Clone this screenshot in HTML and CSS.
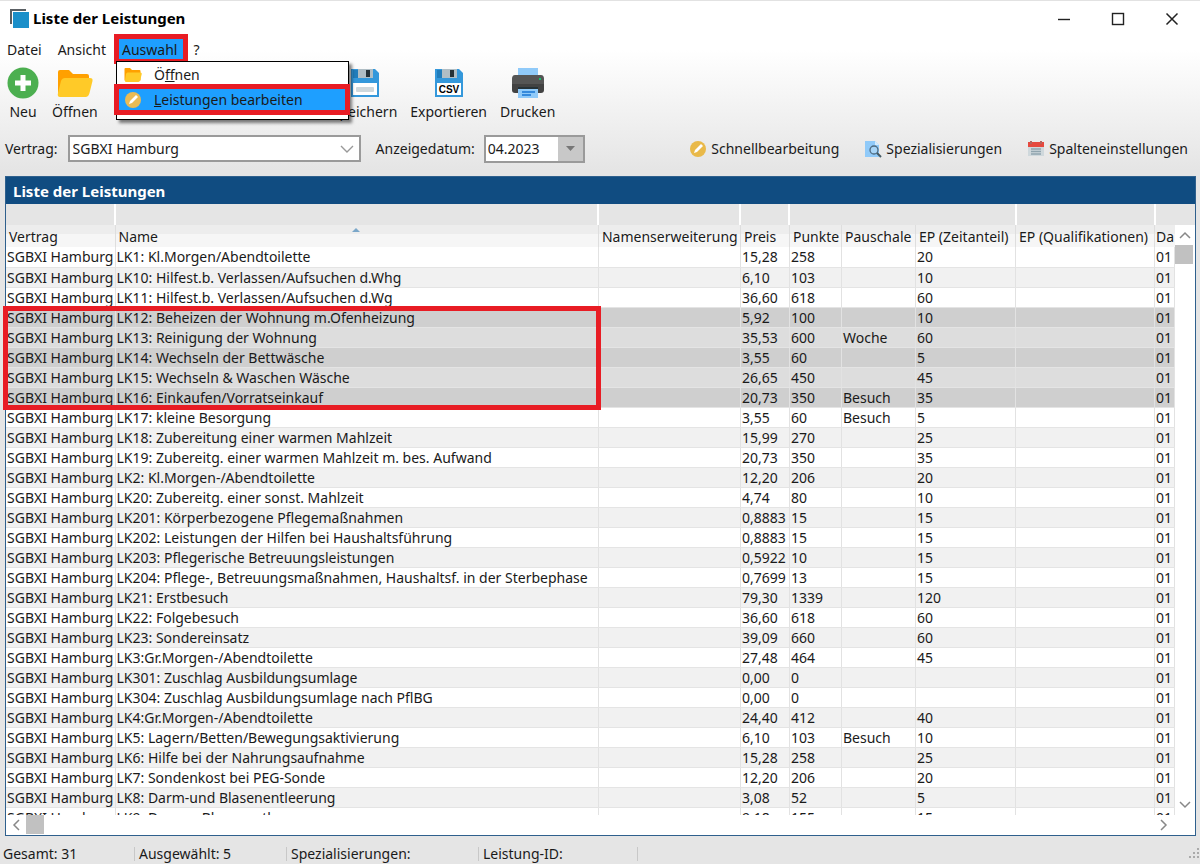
FILE: index.html
```
<!DOCTYPE html>
<html lang="de">
<head>
	<meta charset="UTF-8">
	<title>Liste der Leistungen</title>
	<link rel="stylesheet" href="styles.css">
</head>
<body>
	<header class="titlebar">
		<svg class="logo" width="20" height="20" viewBox="0 0 20 20">
			<path d="M1 15V1h15" fill="none" stroke="#5a5f63" stroke-width="2"/>
			<rect x="3" y="3" width="16" height="16" fill="#1b8fc9"/>
		</svg>
		<h1>Liste der Leistungen</h1>
		<div class="window-buttons">
			<button aria-label="Minimieren"><svg width="14" height="14"><path d="M1 7.5h12" stroke="#222" stroke-width="1.4"/></svg></button>
			<button aria-label="Maximieren"><svg width="14" height="14"><rect x="1.5" y="1.5" width="11" height="11" fill="none" stroke="#222" stroke-width="1.4"/></svg></button>
			<button aria-label="Schließen"><svg width="14" height="14"><path d="M1.500 1.500l11 11M12.500 1.500l-11 11" stroke="#222" stroke-width="1.500"/></svg></button>
		</div>
	</header>

	<nav class="menubar">
		<button>Datei</button>
		<button>Ansicht</button>
		<div class="menu-open">
			<button class="active marked">Auswahl</button>
			<div class="menu">
				<button>
					<svg width="18" height="16" viewBox="0 0 36 30"><path d="M1 26V3q0-2 2-2h9l4 4h15q2 0 2 2v19z" fill="#ffa000"/><path d="M7 10h26q3 0 2.500 3l-3 12q-1 4-4 4H4q-3 0-2-4l2-12q1-3 3-3z" fill="#ffca28"/></svg>
					<span>Ö<u>f</u>fnen</span>
				</button>
				<button class="active marked">
					<svg width="18" height="18" viewBox="0 0 18 18"><circle cx="9" cy="9" r="8" fill="#e9bb55"/><path d="M5 13l1-3 6-6 2 2-6 6z" fill="#fff"/></svg>
					<span><u>L</u>eistungen bearbeiten</span>
				</button>
			</div>
		</div>
		<button>?</button>
	</nav>

	<div class="toolbar">
		<button>
			<svg width="32" height="32" viewBox="0 0 32 32"><circle cx="16" cy="16" r="15.500" fill="#4caf50"/><path d="M16 8v16M8 16h16" stroke="#fff" stroke-width="5"/></svg>
			Neu
		</button>
		<button>
			<svg width="36" height="32" viewBox="0 0 36 30"><path d="M1 26V4q0-2 2-2h9l4 4h14q2 0 2 2v18z" fill="#ffa000"/><path d="M8 10h25q3 0 2.500 3l-3 12q-1 4-4 4H3q-3 0-2-4l3-12q1-3 4-3z" fill="#ffca28"/></svg>
			Öffnen
		</button>
		<button class="save">
			<svg width="30" height="32" viewBox="0 0 30 32"><path d="M1 2h24l4 4v24H1z" fill="#3498db"/><path d="M3 3h5v8H3z" fill="#217dbb"/><path d="M8 2h15v9H8z" fill="#b0bec5"/><path d="M16 3h4v7h-4z" fill="#263238"/><path d="M3 16h24v12H3z" fill="#fff"/><rect x="6" y="20" width="18" height="5" rx="1" fill="#cfd8dc"/></svg>
			Speichern
		</button>
		<button>
			<svg width="30" height="32" viewBox="0 0 30 32"><path d="M1 2h24l4 4v24H1z" fill="#3498db"/><path d="M3 3h5v8H3z" fill="#217dbb"/><path d="M8 2h15v9H8z" fill="#b0bec5"/><path d="M16 3h4v7h-4z" fill="#263238"/><path d="M3 16h24v12H3z" fill="#fff"/><text x="15" y="26" text-anchor="middle" class="csv">CSV</text></svg>
			Exportieren
		</button>
		<button>
			<svg width="34" height="32" viewBox="0 0 34 32"><rect x="7" y="1" width="20" height="12" fill="#90caf9"/><path d="M4 10h26q3 0 3 3v10q0 3-3 3H4q-3 0-3-3V13q0-3 3-3z" fill="#424242"/><path d="M4 8h26q3 0 3 4v5H1v-5q0-4 3-4z" fill="#555"/><path d="M7 3h20v5H7z" fill="#90caf9"/><circle cx="29" cy="12" r="1" fill="#00e676"/><path d="M7 20h20v11H7z" fill="#90caf9"/><path d="M7 20h20v2H7z" fill="#263238"/><path d="M11 25h13M11 28h9" stroke="#1976d2" stroke-width="1.500"/></svg>
			Drucken
		</button>
	</div>

	<div class="filters">
		<label for="vertrag">Vertrag:</label>
		<div class="combo">
			<select id="vertrag"><option>SGBXI Hamburg</option></select>
			<svg width="14" height="8"><path d="M1 1l6 6 6-6" fill="none" stroke="#999" stroke-width="1.400"/></svg>
		</div>
		<label for="datum">Anzeigedatum:</label>
		<div class="date">
			<input id="datum" type="text" value="04.2023">
			<button aria-label="Datum wählen"><svg width="9" height="5"><path d="M0 0h9L4.500 5z" fill="#777"/></svg></button>
		</div>
		<div class="actions">
			<button>
				<svg width="18" height="18" viewBox="0 0 18 18"><circle cx="9" cy="9" r="8" fill="#e9b949"/><path d="M5 13l1-3 6-6 2 2-6 6z" fill="#fff"/></svg>
				Schnellbearbeitung
			</button>
			<button>
				<svg width="18" height="18" viewBox="0 0 18 18"><path d="M1 1h10l4 4v12H1z" fill="#90caf9"/><path d="M11 1l4 4h-4z" fill="#d6ecfd"/><circle cx="10" cy="10" r="4" fill="#a8d5f7" stroke="#4e6a80" stroke-width="1.300"/><path d="M13 13l4 4" stroke="#455a64" stroke-width="2"/></svg>
				Spezialisierungen
			</button>
			<button>
				<svg width="18" height="18" viewBox="0 0 18 18"><path d="M1 5h16v11H1z" fill="#cfd8dc"/><path d="M1 2h16v5H1z" fill="#e5493f"/><path d="M4 1v3M14 1v3" stroke="#b4645f" stroke-width="2"/><path d="M4 9h10M4 11.500h10M4 14h10" stroke="#90a4ae" stroke-width="1.400"/></svg>
				Spalteneinstellungen
			</button>
		</div>
	</div>

	<main class="panel">
		<h2>Liste der Leistungen</h2>
		<div class="grid">
			<div class="rows">
				<table>
					<colgroup>
						<col class="c-vertrag"><col><col class="c-erw"><col class="c-preis"><col class="c-punkte"><col class="c-pausch"><col class="c-zeit"><col class="c-quali"><col class="c-datum">
					</colgroup>
					<thead>
						<tr class="bands"><td></td><td></td><td></td><td></td><td colspan="3"></td><td></td><td></td></tr>
						<tr>
							<th>Vertrag</th>
							<th>Name<svg class="sort" width="8" height="4"><path d="M0 4l4-4 4 4z" fill="#7ba7c9"/></svg></th>
							<th>Namenserweiterung</th>
							<th>Preis</th>
							<th>Punkte</th>
							<th>Pauschale</th>
							<th>EP (Zeitanteil)</th>
							<th>EP (Qualifikationen)</th>
							<th>Da</th>
						</tr>
					</thead>
					<tbody id="list"></tbody>
				</table>
				<div class="selection"></div>
			</div>
			<div class="vscroll">
				<button aria-label="Nach oben"><svg width="12" height="8"><path d="M1 7l5-5 5 5" fill="none" stroke="#888" stroke-width="1.500"/></svg></button>
				<div class="thumb"></div>
				<button aria-label="Nach unten"><svg width="12" height="8"><path d="M1 1l5 5 5-5" fill="none" stroke="#888" stroke-width="1.500"/></svg></button>
			</div>
		</div>
		<div class="hscroll">
			<button aria-label="Nach links"><svg width="8" height="12"><path d="M7 1L2 6l5 5" fill="none" stroke="#888" stroke-width="1.500"/></svg></button>
			<div class="thumb"></div>
			<button aria-label="Nach rechts"><svg width="8" height="12"><path d="M1 1l5 5-5 5" fill="none" stroke="#888" stroke-width="1.500"/></svg></button>
		</div>
	</main>

	<footer class="status">
		<span class="s-gesamt">Gesamt: 31</span>
		<span class="s-auswahl">Ausgewählt: 5</span>
		<span class="s-spez">Spezialisierungen:</span>
		<span class="s-id">Leistung-ID:</span>
		<svg class="grip" width="12" height="12" fill="#aaa"><path d="M9 0h2v2H9zM5 4h2v2H5zM9 4h2v2H9zM1 8h2v2H1zM5 8h2v2H5zM9 8h2v2H9z"/></svg>
	</footer>

	<script src="script.js"></script>
</body>
</html>
```
FILE: styles.css
```
* {
	box-sizing: border-box;
	margin: 0;
	padding: 0;
}
body {
	display: flex;
	flex-direction: column;
	height: 100vh;
	border-top: 1px solid #e2e2e2;
	background: #e5e5e5 linear-gradient(#fff 50px, #e5e5e5 170px) no-repeat;
	font: 14px/20px "Noto Sans", sans-serif;
	color: #1a1a1a;
	overflow: hidden;
}
button,
input,
select {
	font: inherit;
	color: inherit;
	border: 0;
	background: none;
}
button {
	white-space: nowrap;
}
svg {
	flex: none;
}

/* Titelleiste */
.titlebar {
	display: flex;
	align-items: center;
	height: 36px;
	padding: 0 21px 0 10px;
}
.titlebar h1 {
	margin-left: 3px;
	padding-bottom: 2px;
	font: bold 15px/20px "Noto Sans", sans-serif;
	color: #000;
}
.window-buttons {
	display: flex;
	gap: 40px;
	margin-left: auto;
}
.window-buttons button {
	display: flex;
}

/* Menü */
.menubar {
	display: flex;
	height: 26px;
	padding-left: 7px;
}
.menubar > button {
	margin-right: 16px;
}
.menu-open {
	position: relative;
	z-index: 2;
	margin: -3px 5px 0 -8px;
}
.menu-open > button {
	height: 30px;
	padding: 1px 11px 0 8px;
}
.active {
	background: #1e9fff;
}
.marked {
	outline: 5px solid #e81c24;
	outline-offset: -5px;
}
.menu {
	position: absolute;
	top: 27px;
	left: 2px;
	width: 233px;
	height: 59px;
	border: 1px solid #000;
	background: #fff;
	box-shadow: 3px 3px 3px rgba(0,0,0,0.5);
}
.menu button {
	display: flex;
	align-items: center;
	gap: 12px;
	width: 100%;
	height: 26px;
	padding-left: 7px;
}
.menu .marked {
	width: 236px;
	height: 31px;
	margin: -4px 0 0 -3px;
	padding-left: 10px;
}

/* Symbolleiste */
.toolbar {
	display: flex;
	gap: 13px;
	height: 66px;
	padding: 4px 7px 0;
}
.toolbar button {
	display: flex;
	flex-direction: column;
	align-items: center;
	gap: 3px;
	min-width: 32px;
}
.toolbar .save {
	margin-left: 221px;
}
.csv {
	font: bold 10px "Liberation Sans", sans-serif;
}

/* Filter */
.filters {
	display: flex;
	align-items: center;
	height: 46px;
	padding: 0 12px 7px 5px;
}
.combo {
	display: flex;
	align-items: center;
	width: 293px;
	height: 27px;
	margin: 0 15px 0 10px;
	padding-right: 5px;
	border: 2px solid #9a9a9a;
	background: #fff;
}
.combo select {
	flex: 1;
	padding-left: 3px;
	appearance: none;
}
.date {
	display: flex;
	width: 101px;
	height: 28px;
	margin-left: 9px;
	border: 2px solid #9a9a9a;
	background: #fff;
}
.date input {
	flex: 1;
	min-width: 0;
	padding-left: 2px;
}
.date button {
	display: flex;
	align-items: center;
	justify-content: center;
	width: 25px;
	background: #c8c8c8;
}
.actions {
	display: flex;
	gap: 25px;
	margin-left: auto;
}
.actions button {
	display: flex;
	align-items: center;
	gap: 4px;
}

/* Liste */
.panel {
	display: flex;
	flex: 1;
	flex-direction: column;
	min-height: 0;
	margin: 1px 4px 0 5px;
	border: 1px solid #2f608d;
	background: #fff;
}
.panel h2 {
	height: 27px;
	padding: 0 7px;
	background: #104c81;
	font: bold 15px/28px "Noto Sans", sans-serif;
	color: #fff;
}
.grid {
	display: flex;
	flex: 1;
	min-height: 0;
	clip-path: inset(0 0 0 -5px);
}
.rows {
	position: relative;
	flex: 1;
	min-width: 0;
}
.rows table {
	width: 100%;
	table-layout: fixed;
	border-collapse: collapse;
}
.c-vertrag { width: 109px; }
.c-erw { width: 142px; }
.c-preis { width: 49px; }
.c-punkte { width: 52px; }
.c-pausch { width: 74px; }
.c-zeit { width: 100px; }
.c-quali { width: 139px; }
.c-datum { width: 20px; }
.bands td {
	height: 21px;
	border-right: 2px solid #fff;
	background: #e5e5e5;
}
th {
	height: 22px;
	padding: 2px 0 0 3px;
	border-right: 1px solid #dedede;
	background: linear-gradient(#ededed 40%, #f6f6f6 40%);
	font-weight: normal;
	line-height: 18px;
	text-align: left;
	white-space: nowrap;
	overflow: hidden;
}
.bands td:last-child,
th:last-child {
	border-right: 0;
}
th:last-child {
	padding-left: 1px;
}
.sort {
	float: right;
	margin-right: 238px;
}
tbody td {
	height: 20px;
	padding-left: 1px;
	border-right: 1px solid #e2e2e2;
	border-bottom: 1px solid #e4e4e4;
	line-height: 19px;
	white-space: nowrap;
	overflow: hidden;
}
tbody tr:nth-child(even) {
	background: #f1f1f1;
}
tbody tr.selected {
	background: #ddd;
}
tbody tr.selected:nth-child(even) {
	background: #cfcfcf;
}
.selection {
	position: absolute;
	top: 102px;
	left: -3px;
	width: calc(100% - 571px);
	height: 104px;
	border: 5px solid #e81c24;
}
.vscroll {
	display: flex;
	flex-direction: column;
	width: 20px;
	padding-top: 21px;
	background: linear-gradient(#e5e5e5 21px, #fff 21px);
}
.vscroll button,
.hscroll button {
	display: flex;
	align-items: center;
	justify-content: center;
	width: 20px;
	height: 20px;
}
.thumb {
	width: 18px;
	height: 19px;
	background: #c1c1c1;
}
.vscroll button:last-child {
	margin-top: auto;
}
.hscroll {
	display: flex;
	height: 20px;
	padding-right: 21px;
}
.hscroll button:last-child {
	margin-left: auto;
}

/* Statusleiste */
.status {
	display: flex;
	align-items: center;
	height: 28px;
	padding: 8px 0 0 3px;
}
.status span {
	margin-right: 4px;
	border-right: 1px solid #c8c8c8;
	line-height: 14px;
}
.s-gesamt { width: 132px; }
.s-auswahl { width: 148px; }
.s-spez { width: 188px; }
.s-id { width: 155px; }
.grip {
	margin-left: auto;
}
```
FILE: script.js
```
// Name, Preis, Punkte, Pauschale, Zeitanteil
var data = [
	['LK1: Kl.Morgen/Abendtoilette', '15,28', '258', '', '20'],
	['LK10: Hilfest.b. Verlassen/Aufsuchen d.Whg', '6,10', '103', '', '10'],
	['LK11: Hilfest.b. Verlassen/Aufsuchen d.Wg', '36,60', '618', '', '60'],
	['LK12: Beheizen der Wohnung m.Ofenheizung', '5,92', '100', '', '10'],
	['LK13: Reinigung der Wohnung', '35,53', '600', 'Woche', '60'],
	['LK14: Wechseln der Bettwäsche', '3,55', '60', '', '5'],
	['LK15: Wechseln & Waschen Wäsche', '26,65', '450', '', '45'],
	['LK16: Einkaufen/Vorratseinkauf', '20,73', '350', 'Besuch', '35'],
	['LK17: kleine Besorgung', '3,55', '60', 'Besuch', '5'],
	['LK18: Zubereitung einer warmen Mahlzeit', '15,99', '270', '', '25'],
	['LK19: Zubereitg. einer warmen Mahlzeit m. bes. Aufwand', '20,73', '350', '', '35'],
	['LK2: Kl.Morgen-/Abendtoilette', '12,20', '206', '', '20'],
	['LK20: Zubereitg. einer sonst. Mahlzeit', '4,74', '80', '', '10'],
	['LK201: Körperbezogene Pflegemaßnahmen', '0,8883', '15', '', '15'],
	['LK202: Leistungen der Hilfen bei Haushaltsführung', '0,8883', '15', '', '15'],
	['LK203: Pflegerische Betreuungsleistungen', '0,5922', '10', '', '15'],
	['LK204: Pflege-, Betreuungsmaßnahmen, Haushaltsf. in der Sterbephase', '0,7699', '13', '', '15'],
	['LK21: Erstbesuch', '79,30', '1339', '', '120'],
	['LK22: Folgebesuch', '36,60', '618', '', '60'],
	['LK23: Sondereinsatz', '39,09', '660', '', '60'],
	['LK3:Gr.Morgen-/Abendtoilette', '27,48', '464', '', '45'],
	['LK301: Zuschlag Ausbildungsumlage', '0,00', '0', '', ''],
	['LK304: Zuschlag Ausbildungsumlage nach PflBG', '0,00', '0', '', ''],
	['LK4:Gr.Morgen-/Abendtoilette', '24,40', '412', '', '40'],
	['LK5: Lagern/Betten/Bewegungsaktivierung', '6,10', '103', 'Besuch', '10'],
	['LK6: Hilfe bei der Nahrungsaufnahme', '15,28', '258', '', '25'],
	['LK7: Sondenkost bei PEG-Sonde', '12,20', '206', '', '20'],
	['LK8: Darm-und Blasenentleerung', '3,08', '52', '', '5'],
	['LK9: Darm-u.Blasenentleerung', '9,18', '155', '', '15']
];
var list = document.getElementById('list');

for(var i=0; i<data.length; i++){
	var d = data[i];
	var row = list.insertRow();
	var cells = ['SGBXI Hamburg', d[0], '', d[1], d[2], d[3], d[4], '', '01'];
	if(i >= 3 && i <= 7){
		row.className = 'selected';
	}
	for(var j=0; j<cells.length; j++){
		row.insertCell().textContent = cells[j];
	}
}
```
